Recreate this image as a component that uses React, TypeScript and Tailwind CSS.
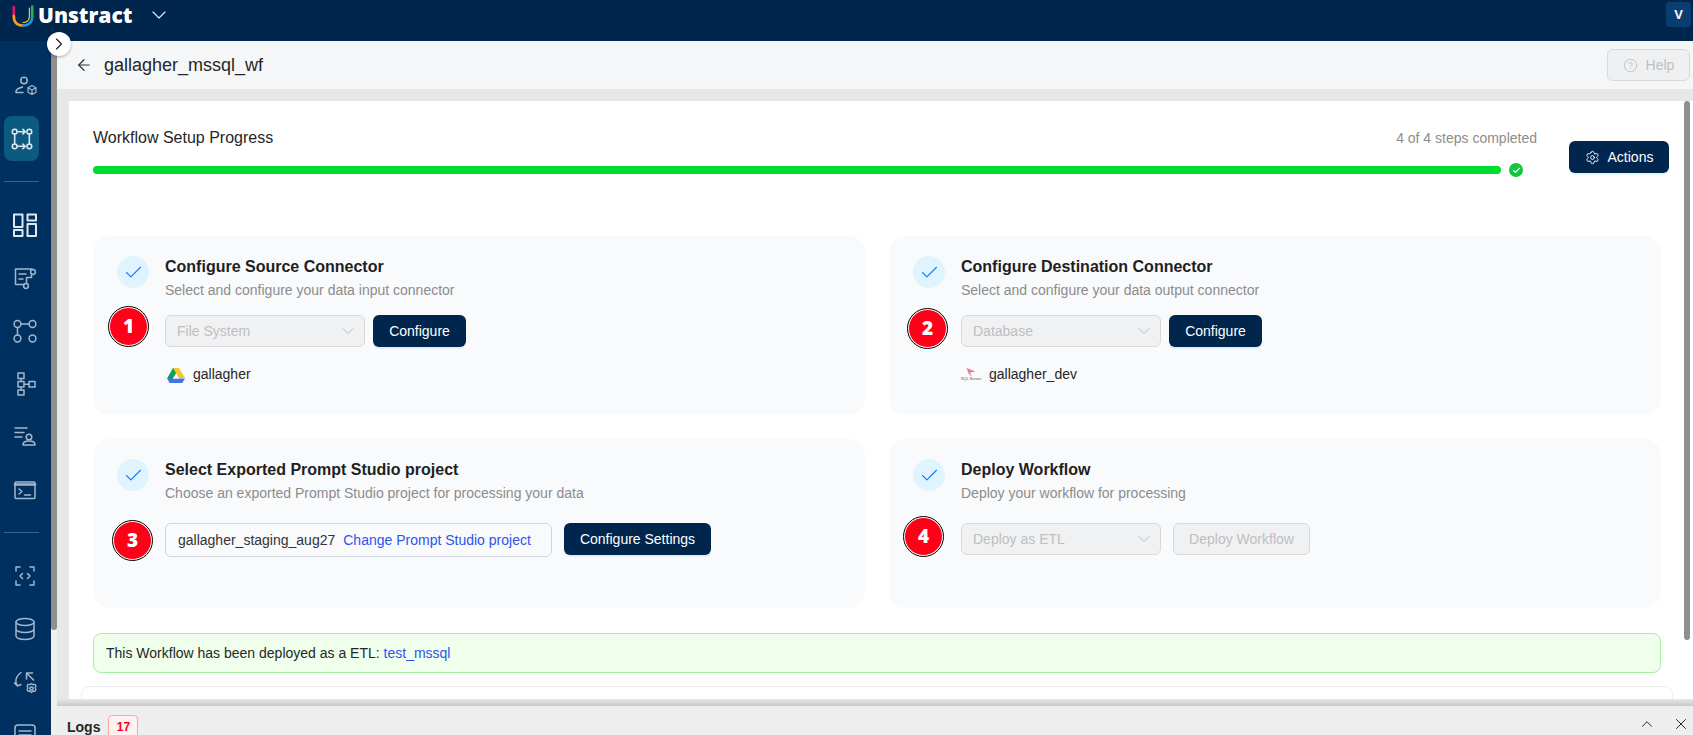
import { ArrowLeft, Check, ChevronDown, ChevronRight, ChevronUp, CircleHelp, Settings, X } from 'lucide-react';
import type { ReactNode } from 'react';

const Logo = () => (
  <svg width="22" height="22" viewBox="0 0 22 22" fill="none" strokeWidth="2.6" strokeLinecap="round">
    <path d="M1.8 2 V11" stroke="#e6176f" />
    <path d="M1.8 11 C1.8 17 5 20.5 11 20.5" stroke="#f7a11a" />
    <path d="M11 20.5 C17 20.5 20.2 17 20.2 11" stroke="#1f8fe0" />
    <path d="M20.2 11 V1.5" stroke="#27b35a" />
    <path d="M17.4 3 V11 C17.4 15 15 17.5 11 17.5" stroke="#f0c419" strokeWidth="1.2" />
  </svg>
);

const NavIcon = ({ children, white }: { children: ReactNode; white?: boolean }) => (
  <svg
    className="shrink-0"
    width="24"
    height="24"
    viewBox="0 0 24 24"
    fill="none"
    stroke={white ? '#dfe7ef' : '#a3b7cb'}
    strokeWidth="1.5"
    strokeLinecap="round"
    strokeLinejoin="round"
  >
    {children}
  </svg>
);

const navTop = [
  <NavIcon key="a">
    <circle cx="10" cy="6.5" r="3.2" />
    <path d="M2 18.5v-1c0-2 3-3.5 6.5-4.5M2 18.5h7" />
    <path d="M18 11.5l4 2.2v4.6l-4 2.2-4-2.2v-4.6zM14 13.7l4 2.3 4-2.3M18 16v4.5" strokeWidth="1.2" />
  </NavIcon>,
];

const navMiddle = [
  <NavIcon key="dash" white>
    <rect x="1" y="1.5" width="8.500" height="12.5" strokeWidth="2" />
    <rect x="14.5" y="1.5" width="8.500" height="6" strokeWidth="2" />
    <rect x="1" y="17" width="8.500" height="6" strokeWidth="2" />
    <rect x="14.5" y="11" width="8.500" height="12" strokeWidth="2" />
  </NavIcon>,
  <NavIcon key="api">
    <path d="M19 3H2.5v15.5H11" />
    <path d="M6 8h7M6 13h4" />
    <circle cx="20" cy="6" r="2.4" />
    <circle cx="13" cy="20" r="2.4" />
    <path d="M18.5 8v3.5H13.5v6" />
  </NavIcon>,
  <NavIcon key="git">
    <circle cx="4.5" cy="5" r="3.4" />
    <circle cx="19.5" cy="5" r="3.4" />
    <circle cx="4.5" cy="19.5" r="3.4" />
    <circle cx="19.5" cy="19.5" r="3.4" />
    <path d="M8 5h8M4.5 8.5v7.5" />
  </NavIcon>,
  <NavIcon key="tree">
    <rect x="5" y="1" width="6" height="5.5" />
    <rect x="5" y="9.5" width="6" height="5.5" />
    <rect x="5" y="18" width="6" height="5" />
    <rect x="16" y="9.5" width="6" height="5.5" />
    <path d="M8 6.5v3M8 15v3M11 12.2h5" />
  </NavIcon>,
  <NavIcon key="list">
    <path d="M2 3h12M2 7.5h9M2 12h7" />
    <circle cx="16" cy="12" r="2.8" />
    <path d="M10 20v-.5c0-2 2.5-3.5 6-3.5s6 1.500 6 3.500v.5z" />
  </NavIcon>,
  <NavIcon key="term">
    <rect x="2" y="4" width="20" height="16.5" rx="1" />
    <path d="M2 6.500h20" strokeWidth="2.500" />
    <path d="M6 11l3 2.500-3 2.500M11.500 17h6" />
  </NavIcon>,
];

const navBottom = [
  <NavIcon key="scan">
    <path d="M3 7V3h4M17 3h4v4M21 17v4h-4M7 21H3v-4" />
    <path d="M9.500 9.500L7 12l2.500 2.500M14.500 9.500L17 12l-2.500 2.500" />
  </NavIcon>,
  <NavIcon key="db">
    <ellipse cx="12" cy="5" rx="9" ry="3.500" />
    <path d="M3 5v14c0 2 4 3.500 9 3.500s9-1.500 9-3.500V5M3 12c0 2 4 3.500 9 3.500s9-1.500 9-3.500" />
  </NavIcon>,
  <NavIcon key="sync">
    <path d="M8 2.500C4.500 5 2.500 9 3 12.500l1.500 3.500M1.500 13l3 3 3.500-1.500" />
    <path d="M13.500 9V3h6M13.500 3l7 7" />
    <circle cx="18.500" cy="18.500" r="1.600" />
    <path d="M18.500 13.500l1.500 1.200 2-.3 1 1.800-1 1.600 1 1.700-1 1.800-2-.3-1.500 1.500-1.500-1.500-2 .3-1-1.800 1-1.700-1-1.600 1-1.800 2 .3z" strokeWidth="1.300" />
  </NavIcon>,
  <NavIcon key="doc">
    <rect x="2" y="2" width="20" height="20" rx="3" />
    <path d="M6 8h12M6 12h12M6 16h8" />
  </NavIcon>,
];

const DriveIcon = () => (
  <svg width="18" height="16" viewBox="0 0 18 16">
    <path d="M6 0h6l-3.500 6.200L5 12 0 10.500z" fill="#0ca05b" transform="translate(0 1)" />
    <path d="M6 1h6l6 10h-6z" fill="#f7c62e" />
    <path d="M3.500 11.500H18l-2.800 4.500H2.700L0 11.500z" fill="#4672e8" />
    <path d="M6 11.500L9 6.500l3 5z" fill="#f4f6f9" />
  </svg>
);

const SqlServerIcon = () => (
  <span className="flex w-[20px] flex-col items-center leading-none">
    <svg width="12" height="9" viewBox="0 0 10 8">
      <path d="M1 0l8 3-5 1 2 4-3-3z" fill="#e07f8c" />
    </svg>
    <span className="text-[4px] text-[#555] whitespace-nowrap">SQL Server</span>
  </span>
);

const StepCheck = () => (
  <span className="flex size-8 shrink-0 items-center justify-center rounded-full bg-[#e0f4ff]">
    <Check size={21} strokeWidth={1.3} className="text-[#1677ff]" />
  </span>
);

const Select = ({ label, w = 'w-[200px]' }: { label: string; w?: string }) => (
  <div className={`${w} flex h-8 items-center justify-between rounded-md border border-[#d9d9d9] bg-[#f0f1f3] pl-[11px] pr-[6px] text-[14px] text-[#bfbfbf]`}>
    {label}
    <ChevronDown size={20} strokeWidth={1.1} className="text-[#b5b5b5]" />
  </div>
);

const DarkButton = ({ children, className }: { children: ReactNode; className?: string }) => (
  <button className={`flex h-8 items-center justify-center rounded-md bg-[#00264d] text-[14px] text-white shadow-[0_2px_0_rgba(5,145,255,0.1)] ${className ?? ''}`}>
    {children}
  </button>
);

const Badge = ({ n, className }: { n: number; className: string }) => (
  <span className={`absolute flex size-[39px] items-center justify-center rounded-full border border-white bg-[#ff0019] font-['Open_Sans',sans-serif] text-[19px] font-extrabold text-white outline outline-[1.5px] outline-black ${className}`}>
    {n}
  </span>
);

const Card = ({
  title,
  text,
  children,
  tall,
}: {
  title: string;
  text: string;
  children: ReactNode;
  tall?: boolean;
}) => (
  <section className={`relative flex gap-4 rounded-2xl bg-[#f9fafc] pl-6 ${tall ? 'h-[179px]' : 'h-[169px]'}`}>
    <div className="pt-[20px]">
      <StepCheck />
    </div>
    <div className="flex-1 pt-[21px]">
      <h3 className="text-[16px] leading-[20px] font-bold text-[#1f1f1f]">{title}</h3>
      <p className="mt-[3px] text-[14px] leading-[20px] text-[#8c8c8c]">{text}</p>
      {children}
    </div>
  </section>
);

export default function App() {
  return (
    <div className="flex h-[735px] w-[1693px] flex-col overflow-hidden bg-white font-['Liberation_Sans',sans-serif]">
      {/* top bar */}
      <header className="flex h-[41px] shrink-0 items-start justify-between bg-[#00264d] pl-3 pr-[2px] pt-[2px]">
        <div className="flex items-center">
          <div className="mt-[2px]">
            <Logo />
          </div>
          <span className="ml-[4px] font-['Open_Sans',sans-serif] text-[21px] leading-[26px] font-extrabold tracking-[0px] text-white">Unstract</span>
          <ChevronDown size={24} strokeWidth={1.2} className="ml-[15px] text-[#dfe7ef]" />
        </div>
        <span className="flex h-[25px] w-[25px] items-center justify-center rounded-[4px] bg-[#0a3d70] text-[13px] font-bold text-white">V</span>
      </header>

      <div className="relative flex min-h-0 flex-1">
        <button className="absolute left-[47px] top-[-9px] z-10 flex size-6 items-center justify-center rounded-full bg-white shadow-[0_1px_3px_rgba(0,0,0,0.3)]">
          <ChevronRight size={20} strokeWidth={1.4} className="text-[#222]" />
        </button>

        {/* side nav */}
        <nav className="flex w-[51px] shrink-0 flex-col overflow-hidden bg-[#00305f]">
          <div className="flex shrink-0 flex-col items-center pl-[1px] pt-[33px]">
            {navTop}
            <span className="mr-[9px] mt-[18px] flex h-[45px] w-[35px] items-center justify-center rounded-lg bg-[#0d5a80]">
              <svg width="22" height="22" viewBox="0 0 24 24" fill="none" stroke="#dfe7ef" strokeWidth="1.700" strokeLinecap="round" strokeLinejoin="round">
                <circle cx="4" cy="4" r="2.600" />
                <circle cx="20" cy="4" r="2.600" />
                <circle cx="4" cy="20" r="2.600" />
                <circle cx="20" cy="20" r="2.600" />
                <path d="M4 6.600v10.800M20 6.600v10.800M7.500 4h8M13 1.500L15.500 4 13 6.500M7.500 20h8M13 17.500l2.500 2.500-2.500 2.500" />
              </svg>
            </span>
          </div>
          <div className="ml-[4px] mr-[12px] mt-[20px] h-px shrink-0 bg-[#3d6288]" />
          <div className="flex shrink-0 flex-col items-center gap-[29px] pr-[2px] pt-[31px]">{navMiddle}</div>
          <div className="ml-[4px] mr-[12px] mt-[30px] h-px shrink-0 bg-[#3d6288]" />
          <div className="flex shrink-0 flex-col items-center gap-[29px] pr-[2px] pt-[31px]">{navBottom}</div>
        </nav>

        <div className="w-[6px] shrink-0 bg-[#f0f0f0]">
          <div className="h-[589px] rounded-b-[3px] bg-[#8f8f8f]" />
        </div>

        <main className="flex min-w-0 flex-1 flex-col bg-[#e7e7e7]">
          <div className="flex h-[48px] shrink-0 items-center justify-between bg-[#f5f6f8] pl-[18px] pr-[3px]">
            <div className="flex items-center gap-[11px]">
              <ArrowLeft size={18} strokeWidth={1.6} className="text-[#333]" />
              <h1 className="text-[18px] text-[#262626]">gallagher_mssql_wf</h1>
            </div>
            <button className="flex h-[32px] w-[83px] items-center justify-center gap-[8px] rounded-md border border-[#d9d9d9] bg-[#eff0f2] text-[14px] text-[#bfbfbf]">
              <CircleHelp size={15} strokeWidth={1.4} />
              Help
            </button>
          </div>

          <div className="relative mt-[12px] ml-[12px] min-h-0 flex-1 overflow-hidden bg-white pl-6 pr-8">
            <div className="absolute right-[3px] top-0 h-[539px] w-[6px] rounded-[3px] bg-[#8f8f8f]" />

            <div className="-mr-2 flex h-[135px] items-start justify-between">
              <div className="w-[1444px] pt-[27px]">
                <div className="flex items-center justify-between">
                  <span className="text-[16px] leading-[20px] text-[#262626]">Workflow Setup Progress</span>
                  <span className="text-[14px] leading-[20px] text-[#8c8c8c]">4 of 4 steps completed</span>
                </div>
                <div className="mt-[15px] flex items-center gap-2">
                  <div className="h-2 w-[1408px] rounded-full bg-[#00dc2e]" />
                  <span className="flex size-[14px] items-center justify-center rounded-full bg-[#10c83c]">
                    <Check size={9} strokeWidth={3} className="text-white" />
                  </span>
                </div>
              </div>
              <DarkButton className="mt-[40px] w-[100px] gap-[8px]">
                <Settings size={15} strokeWidth={1.5} />
                Actions
              </DarkButton>
            </div>

            <div className="grid grid-cols-2 gap-6">
              <Card tall title="Configure Source Connector" text="Select and configure your data input connector">
                <Badge n={1} className="left-[16px] top-[71px]" />
                <div className="mt-[15px] flex gap-2">
                  <Select label="File System" />
                  <DarkButton className="w-[93px]">Configure</DarkButton>
                </div>
                <div className="mt-[17px] flex items-center gap-[8px] pl-[2px] text-[14px] text-[#262626]">
                  <DriveIcon />
                  gallagher
                </div>
              </Card>
              <Card tall title="Configure Destination Connector" text="Select and configure your data output connector">
                <Badge n={2} className="left-[19px] top-[73px]" />
                <div className="mt-[15px] flex gap-2">
                  <Select label="Database" />
                  <DarkButton className="w-[93px]">Configure</DarkButton>
                </div>
                <div className="mt-[17px] flex items-center gap-[8px] text-[14px] text-[#262626]">
                  <SqlServerIcon />
                  gallagher_dev
                </div>
              </Card>
              <Card title="Select Exported Prompt Studio project" text="Choose an exported Prompt Studio project for processing your data">
                <Badge n={3} className="left-[20px] top-[82px]" />
                <div className="mt-[20px] flex gap-3">
                  <div className="flex h-[34px] w-[387px] items-center gap-2 rounded-md border border-[#d0d5dd] bg-[#f9fafc] pl-3 text-[14px] text-[#333]">
                    gallagher_staging_aug27
                    <span className="text-[#2f54eb]">Change Prompt Studio project</span>
                  </div>
                  <DarkButton className="w-[147px]">Configure Settings</DarkButton>
                </div>
              </Card>
              <Card title="Deploy Workflow" text="Deploy your workflow for processing">
                <Badge n={4} className="left-[15px] top-[78px]" />
                <div className="mt-[20px] flex gap-3">
                  <Select label="Deploy as ETL" />
                  <button className="h-8 w-[137px] rounded-md border border-[#d9d9d9] bg-[#f0f1f3] text-[14px] text-[#bfbfbf]">Deploy Workflow</button>
                </div>
              </Card>
            </div>

            <div className="mt-[25px] flex h-[40px] items-center rounded-lg border border-[#a3f2a3] bg-[#f0ffec] pl-3 text-[14px] text-[#262626]">
              <span>
                This Workflow has been deployed as a ETL: <span className="text-[#2f54eb]">test_mssql</span>
              </span>
            </div>

            <div className="-mx-3 mt-[13px] h-[40px] rounded-lg border border-[#eeeeee] bg-white" />
          </div>

          {/* logs */}
          <div className="relative z-10 h-[36px] shrink-0 bg-[#eeeeee]">
            <div className="h-[7px] bg-gradient-to-b from-[#e7e7e7] to-[#c9c9c9]" />
            <div className="flex items-start justify-between pl-[10px] pr-[3px] pt-[9px]">
              <div className="flex items-center gap-[8px]">
                <span className="text-[14px] leading-[20px] font-bold text-[#262626]">Logs</span>
                <span className="flex h-[24px] w-[30px] items-center justify-center rounded-[4px] border border-[#ffa3a8] bg-[#fff1f0] text-[12px] font-bold text-[#f5001d]">17</span>
              </div>
              <div className="flex items-center gap-[16px] text-[#222]">
                <ChevronUp size={18} strokeWidth={1.3} />
                <X size={18} strokeWidth={1.3} />
              </div>
            </div>
          </div>
        </main>
      </div>
    </div>
  );
}
